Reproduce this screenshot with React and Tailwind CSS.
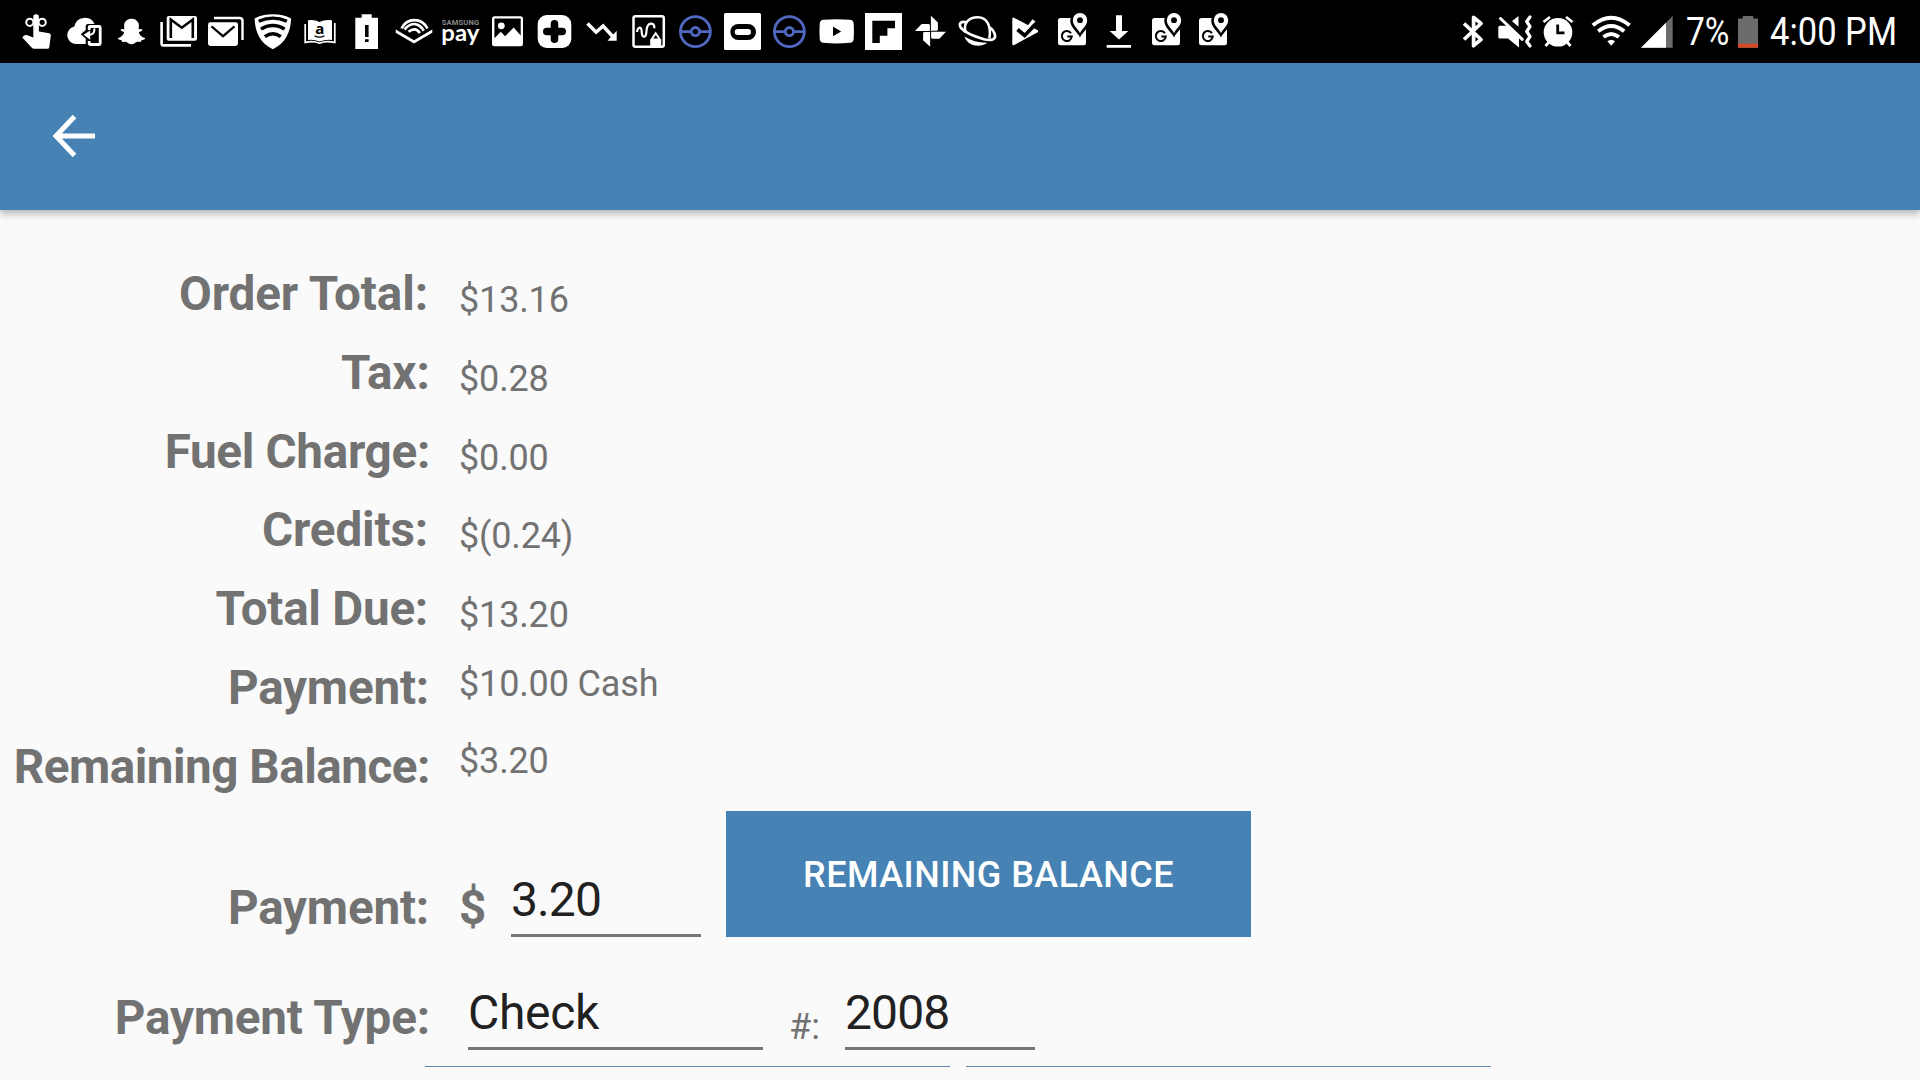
import React from 'react';
import { FaSnapchatGhost } from 'react-icons/fa';

const Cell = ({ children }) => (
  <svg className="h-[63px] w-[47px] shrink-0" viewBox="0 0 47 63" fill="#fff">
    {children}
  </svg>
);

const Slot = ({ x, w, children, className }) => (
  <svg className={className} viewBox={`${x} 0 ${w} 63`} fill="#fff">
    {children}
  </svg>
);

const Reminder = () => (
  <Cell>
    <g fill="none" stroke="#fff" strokeWidth="2">
      <circle cx="15.8" cy="22.3" r="3.6" />
      <circle cx="28.2" cy="22.3" r="3.6" />
    </g>
    <path d="M19.3 17q0-2.8 2.8-2.8t2.8 2.8v14.5l10.3 1.8q1.8.5 1.6 2.3l-1.5 11.6q-.3 1.6-1.8 1.6H20q-1.3 0-2.2-1L8.3 37.6l1.8-2q1-.8 2.6-.5l6.600 2.400z" />
  </Cell>
);

const CloudPhone = () => (
  <Cell>
    <path d="M15.5 44a8.9 8.9 0 0 1-2.2-17.6A10.8 10.8 0 0 1 33.6 24H27q-2.300 0-2.300 2.300V30l-5 4.200 5 4.400V44z" />
    <path d="M28.200 30v-2.500q0-1 1-1h9q1 0 1 1v16q0 1-1 1h-9q-1 0-1-1V41" fill="none" stroke="#fff" strokeWidth="2.800" />
    <path d="M33.300 28.500q.8 6-5.500 6.400" fill="none" stroke="#fff" strokeWidth="2.200" />
    <path d="M29.200 30.400v9.400l-6.600-5z" />
  </Cell>
);

const Snapchat = () => (
  <div className="flex h-[63px] w-[47px] shrink-0 items-center justify-center text-white">
    <FaSnapchatGhost size={27} />
  </div>
);

const Gmail = () => (
  <Cell>
    <path d="M6.6 22v21.7q0 1.7 1.7 1.7H36" fill="none" stroke="#fff" strokeWidth="2.6" />
    <rect x="11.7" y="16" width="30.3" height="24.8" rx="2" />
    <path d="M15.8 38V19.5l11 8.2 11-8.2V38" fill="none" stroke="#000" strokeWidth="2.6" />
  </Cell>
);

const Mail = () => (
  <Cell>
    <path d="M12 18h25.5q3 0 3 3v19" fill="none" stroke="#fff" strokeWidth="2.4" />
    <rect x="6" y="22.3" width="30" height="23.7" rx="2.4" />
    <path d="M9.5 26.3L21 36.2l11.5-9.9" fill="none" stroke="#000" strokeWidth="2.2" />
  </Cell>
);

const WifiShield = () => (
  <Cell>
    <path d="M23.8 14.2c7 0 13 1.3 18.3 4.3-.4 14-6 25-18.3 30.7C11.500 43.500 6 32.500 5.600 18.500c5.300-3 11.200-4.300 18.200-4.300z" />
    <g fill="none" stroke="#000" strokeWidth="3.400">
      <path d="M9.700 21.300c9-4.100 19.200-4.100 28.200 0" />
      <path d="M12 29.200c7.200-5 16.400-5 23.600 0" />
      <path d="M15.800 36.600c5-3.700 11-3.700 16 0" />
    </g>
  </Cell>
);

const Kindle = () => (
  <Cell>
    <path d="M12 20.300q6.500-1 11.500 1.600Q28.500 19.300 36 20.300V40q-7-.6-12.500 1.600Q18.500 39.400 12 40z" />
    <path d="M9.200 24v18.400q8-1.800 14.300.8 6.300-2.600 15.300-.8V23" fill="none" stroke="#fff" strokeWidth="1.700" />
    <text x="23.700" y="34" textAnchor="middle" fill="#000" fontFamily="'Open Sans', sans-serif" fontWeight="700" fontSize="15">a</text>
    <path d="M18.500 35.700q5 3 10 0" fill="none" stroke="#000" strokeWidth="1.200" />
  </Cell>
);

const BatteryAlert = () => (
  <Cell>
    <path d="M12.300 17.700h6.400v-3.500h10v3.500H35V49H12.300z" />
    <path d="M22 25h3.600v12H22zM22 39.300h3.600v2.600H22z" fill="#000" />
  </Cell>
);

const Audible = () => (
  <Cell>
    <path d="M5.700 29.500l18.300 10.700 18.300-10.700V32.700L24 43.500 5.700 32.700z" />
    <g fill="none" stroke="#fff" strokeWidth="2.700">
      <path d="M11.500 28.500c5.500-11 20-11.500 26 0" />
      <path d="M14.500 29.500c7-8 14.500-7 19.300 1.300" />
      <path d="M18.500 31.800c4.800-4 9-3 11.300 1.300" />
    </g>
  </Cell>
);

const SamsungPay = () => (
  <Cell>
    <text x="4.700" y="24.600" textLength="37.500" lengthAdjust="spacing" fill="#8a8a8a" fontFamily="Roboto, sans-serif" fontWeight="700" fontSize="7.600">SAMSUNG</text>
    <text x="4.300" y="41" textLength="38" lengthAdjust="spacingAndGlyphs" fontFamily="Lato, sans-serif" fontWeight="700" fontSize="23.500">pay</text>
  </Cell>
);

const Picture = () => (
  <Cell>
    <path fillRule="evenodd" d="M10.500 16.300h26q2.500 0 2.500 2.500v25q0 2.500-2.500 2.500h-26Q8 46.300 8 43.800v-25q0-2.500 2.500-2.500zM10.400 18.600v19.700l6.400-6.500 4.300 4.400 8.600-8.600 7 7.800V18.600z" />
    <circle cx="17.300" cy="25.800" r="3.400" />
  </Cell>
);

const HealthCross = () => (
  <Cell>
    <rect x="6.700" y="15" width="33.600" height="33" rx="9" />
    <path d="M23.500 23.800v15.400M15.800 31.500h15.400" stroke="#000" strokeWidth="7.600" strokeLinecap="round" />
  </Cell>
);

const TrendDown = () => (
  <Cell>
    <path d="M9.500 23.600l8.600 8.600 7-6.200 10.500 11.500" fill="none" stroke="#fff" strokeWidth="3.500" />
    <path d="M38.700 30.700v10h-9.200z" />
  </Cell>
);

const Memo = () => (
  <Cell>
    <rect x="8.500" y="16.200" width="30.300" height="30.600" rx="2" fill="none" stroke="#fff" strokeWidth="2.500" />
    <path d="M12 32c.5-4.500 4-6 4.500-2 .3 5 1 7.500 3.300 6.500 3-1.500.2-8.500 3.700-11.800 3-2.300 6.500-.6 5.700 3.600" fill="none" stroke="#fff" strokeWidth="2.200" />
    <path d="M30.700 31.500l5.800 8.700h-11.600z" />
    <path d="M30.700 35l2.300 3.600h-4.600z" fill="#000" />
    <path d="M25.200 39.500h11v7.300h-11z" />
  </Cell>
);

const Pokeball = () => (
  <Cell>
    <g fill="none" stroke="#5068c0" strokeWidth="2.800">
      <circle cx="23.400" cy="31.600" r="15" />
      <circle cx="23.400" cy="31.600" r="4.100" />
      <path d="M8.500 31.600h10.800M27.500 31.600h10.800" />
    </g>
  </Cell>
);

const Oculus = () => (
  <Cell>
    <rect x="5" y="13" width="37" height="37" rx="1.500" />
    <rect x="11.300" y="24" width="25.700" height="16" rx="8" fill="#000" />
    <rect x="15.700" y="29" width="16.300" height="6" rx="3" />
  </Cell>
);

const YouTube = () => (
  <Cell>
    <path d="M10.500 19.800q13-1.200 26.400 0 3.400.2 3.800 4 .5 7.600 0 15.200-.4 3.500-3.800 3.800-13.400 1.200-26.400 0-3.400-.3-3.800-3.800-.500-7.600 0-15.200.4-3.800 3.800-4z" />
    <path d="M20 26.600v9.600l8.200-4.800z" fill="#000" />
  </Cell>
);

const Flipboard = () => (
  <Cell>
    <path d="M5 13h37v37H5z" />
    <path d="M12.300 20.700H35v7.500h-7.600v7.500h-7.600v7.400h-7.500z" fill="#000" />
  </Cell>
);

const Pinwheel = () => (
  <Cell>
    {[0, 90, 180, 270].map((a) => (
      <path key={a} transform={`rotate(${a} 23.500 31.300)`} d="M23.900 15.800l7 6.600v7.400l-1 .9h-6z" />
    ))}
  </Cell>
);

const Planet = () => (
  <Cell>
    <g fill="none" stroke="#fff">
      <path d="M11.800 32.500C8.800 24 14 17.200 23.700 17.200 32.500 17.200 37.500 25 35.400 38.500" strokeWidth="2.500" />
      <path d="M13 22.800C8 20.500 3.700 22.800 7.200 28.200 12 34 22 37 30 39.300 37.500 41 41.800 39.500 41 35.300 40.400 32 38.500 29.500 35.800 27.500" strokeWidth="2.700" />
    </g>
    <path d="M10.300 36.500C18 41 25 43 33.500 42.700 26 48 14 46.500 10.300 36.500z" />
  </Cell>
);

const PlayCheck = () => (
  <Cell>
    <path d="M11.300 19q0-2 2-1.100l23 12q1.800 1.200 0 2.500l-23 12.500q-2 1-2-1z" />
    <path d="M16.500 29.500l7.200 6L38.500 20" fill="none" stroke="#000" strokeWidth="3.800" />
    <path d="M23 30.500l8.500-11.200 3 2.200-11 10.800z" />
  </Cell>
);

const MapsPin = () => (
  <Cell>
    <rect x="10" y="18" width="28" height="27.300" rx="2.500" />
    <path d="M32 37.500c-2-5-9.800-9.500-9.800-17.200a9.800 9.800 0 0 1 19.600 0c0 7.700-7.800 12.200-9.800 17.200z" fill="#000" />
    <path d="M32 33.200c-1.500-4.200-7.200-7.500-7.200-13a7.200 7.200 0 0 1 14.400 0c0 5.500-5.700 8.800-7.200 13z" />
    <circle cx="32" cy="20.200" r="2.900" fill="#000" />
    <path d="M23 33.200a5 5 0 1 0 .8 3.300h-4.500" fill="none" stroke="#000" strokeWidth="2" />
  </Cell>
);

const Download = () => (
  <Cell>
    <path d="M21 15.300h6v15.700h6.300l-9.300 8.500-9.300-8.500H21zM11.700 45H36v2.700H11.700z" />
  </Cell>
);

const NOTIFICATIONS = [
  Reminder, CloudPhone, Snapchat, Gmail, Mail, WifiShield, Kindle, BatteryAlert, Audible,
  SamsungPay, Picture, HealthCross, TrendDown, Memo, Pokeball, Oculus, Pokeball, YouTube,
  Flipboard, Pinwheel, Planet, PlayCheck, MapsPin, Download, MapsPin, MapsPin,
];

const StatusBar = () => (
  <header className="flex h-[63px] shrink-0 items-center justify-between bg-black pl-[14px] text-white">
    <div className="flex">
      {NOTIFICATIONS.map((Icon, i) => (
        <Icon key={i} />
      ))}
    </div>
    <div className="flex w-[470px] items-center">
      <Slot x={1450} w={45} className="h-[63px] w-[45px] shrink-0">
        <path d="M1464 23.500l17 16-7.400 6.200V17.300l7.400 6.200-17 16" fill="none" stroke="#fff" strokeWidth="3.700" strokeLinejoin="round" />
      </Slot>
      <Slot x={1495} w={42} className="h-[63px] w-[42px] shrink-0">
        <path d="M1498.300 27.200q0-1.500 1.500-1.500h7.200l12 12v9.800l-11-9h-8.200q-1.500 0-1.500-1.500zM1518.500 16v10.800l-6.500-5.600z" />
        <path d="M1500.500 18.500l21.800 20.800" stroke="#fff" strokeWidth="3" strokeLinecap="round" />
        <path d="M1530 17l-3.300 4.500 3.300 5-3.300 5 3.300 5-3.300 5 3.300 4.500" fill="none" stroke="#fff" strokeWidth="3.200" strokeLinejoin="round" strokeLinecap="round" />
      </Slot>
      <Slot x={1537} w={43} className="h-[63px] w-[43px] shrink-0">
        <circle cx="1558" cy="32.300" r="14.300" />
        <path d="M1543.500 22l6.500-5M1572.500 22l-6.500-5M1549 42l-3.500 4M1567 42l3.500 4" stroke="#fff" strokeWidth="2.700" />
        <path d="M1557.700 24.500v8.300h6.800" fill="none" stroke="#000" strokeWidth="2.800" />
      </Slot>
      <Slot x={1580} w={57} className="h-[63px] w-[57px] shrink-0">
        <g fill="none" stroke="#fff" strokeWidth="3.900">
          <path d="M1592.800 25.300q18.400-15.300 36.800 0" />
          <path d="M1598.200 31.200q13-10.300 26 0" />
          <path d="M1603.500 37q7.700-6.200 15.400 0" />
        </g>
        <path d="M1607.300 41.300q3.900-3 7.800 0l-3.900 4.500z" />
      </Slot>
      <Slot x={1637} w={49} className="h-[63px] w-[49px] shrink-0">
        <path d="M1672.700 16v31.700H1641z" fill="#6b6b6b" />
        <path d="M1666 22.700v25h-25z" />
      </Slot>
      <div className="w-[49px] shrink-0 text-[39px] leading-[46px]">
        <span className="inline-block origin-left scale-x-[0.86]">7%</span>
      </div>
      <Slot x={1735} w={33} className="h-[63px] w-[33px] shrink-0">
        <path d="M1738 18.500h4.700V16h10.600v2.500h4.700v29.200h-20z" fill="#6b6b6b" />
        <path d="M1738 43.700h20v4h-20z" fill="#d84a28" />
      </Slot>
      <div className="w-[150px] shrink-0 pl-[2px] text-[39px] leading-[46px] whitespace-nowrap">
        <span className="inline-block origin-left scale-x-[0.885]">4:00 PM</span>
      </div>
    </div>
  </header>
);

const Label = ({ children, className }) => (
  <div className={`w-[431px] shrink-0 whitespace-nowrap text-right text-[47.6px] leading-[56px] font-bold ${className}`}>
    {children}
  </div>
);

const ROWS = [
  ['Order Total:', '$13.16', 'pr-[3px] tracking-[-0.1px]', 'pt-[13px]'],
  ['Tax:', '$0.28', 'pr-px', 'pt-[13px]'],
  ['Fuel Charge:', '$0.00', 'pr-px tracking-[-0.3px]', 'pt-[13px]'],
  ['Credits:', '$(0.24)', 'pr-[3px] tracking-[-0.15px]', 'pt-[13px]'],
  ['Total Due:', '$13.20', 'pr-[3px] tracking-[-0.25px]', 'pt-[13px]'],
  ['Payment:', '$10.00 Cash', 'pr-[2px] tracking-[-0.2px]', 'pt-[3px]'],
  ['Remaining Balance:', '$3.20', 'pr-px tracking-[-0.48px]', 'pt-px'],
];

export default function App() {
  return (
    <div className="flex h-[1080px] w-[1920px] flex-col overflow-hidden bg-[#fafafa] font-['Roboto',sans-serif] text-[#727272]">
      <StatusBar />
      <nav className="z-10 flex h-[147px] shrink-0 items-center bg-[#4682b4] pl-[52px] shadow-[0_3px_8px_rgba(0,0,0,0.32)]">
        <svg className="mb-px h-[44px] w-[44px]" viewBox="0 0 44 44" fill="none" stroke="#fff" strokeWidth="5">
          <path d="M43 22H4M22.500 2.500L4 22l18.500 19.500" />
        </svg>
      </nav>
      <main className="flex flex-col pt-[56px]">
        {ROWS.map(([label, value, fit, pad]) => (
          <div key={label} className="flex h-[78.8px] items-start gap-[28px]">
            <Label className={fit}>{label}</Label>
            <div className={`text-[36px] leading-[42px] tracking-[-0.15px] ${pad}`}>{value}</div>
          </div>
        ))}
        <div className="mt-[-7.6px] flex h-[126px] items-start pt-[1px]">
          <div className="pt-[69px]">
            <Label className="pr-[2px] tracking-[-0.2px]">Payment:</Label>
          </div>
          <div className="ml-[28px] w-[52px] pt-[69px] text-[47.6px] leading-[56px] font-bold">$</div>
          <div className="mt-[60px] h-[66px] w-[190px] border-b-[3px] border-[#757575] pt-px text-[48px] leading-[56px] tracking-[-0.9px] text-[#212121]">
            3.20
          </div>
          <button className="ml-[25px] h-[126px] w-[525px] bg-[#4682b4] pt-[3px] text-[36px] font-medium tracking-[0.45px] text-white">
            REMAINING BALANCE
          </button>
        </div>
        <div className="mt-[48px] flex h-[68px] items-start">
          <div className="pt-[6px]">
            <Label className="pr-px tracking-[-0.15px]">Payment Type:</Label>
          </div>
          <div className="ml-[37px] h-[66px] w-[295px] border-b-[3px] border-[#757575] pt-px text-[48px] leading-[56px] tracking-[-0.3px] text-[#212121]">
            Check
          </div>
          <div className="ml-[26px] w-[56px] pt-[22px] text-[36px] leading-[42px]">#:</div>
          <div className="h-[66px] w-[190px] border-b-[3px] border-[#757575] pt-px text-[48px] leading-[56px] tracking-[-0.9px] text-[#212121]">
            2008
          </div>
        </div>
        <div className="mt-[14px] flex gap-4 pl-[425px]">
          <div className="h-px w-[525px] bg-[#5f87ab]" />
          <div className="h-px w-[525px] bg-[#5f87ab]" />
        </div>
      </main>
    </div>
  );
}
